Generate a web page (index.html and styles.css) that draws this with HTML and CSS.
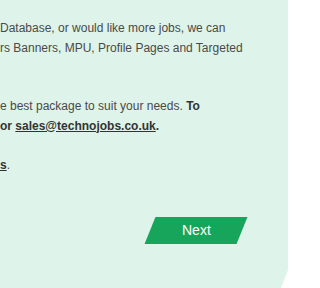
FILE: index.html
```html
<!DOCTYPE html>
<html lang="en">
<head>
<meta charset="utf-8">
<title>Advertising packages</title>
<link rel="stylesheet" href="styles.css">
</head>
<body>
<div class="panel">
  <div class="copy">
    <p class="intro">Database, or would like more jobs, we can<br>rs Banners, MPU, Profile Pages and Targeted</p>
    <p>e best package to suit your needs. <strong>To</strong><br><strong>or <a href="#">sales@technojobs.co.uk</a>.</strong></p>
    <p><a href="#">s</a>.</p>
  </div>
  <div class="actions">
    <a class="next" href="#"><span>Next</span></a>
  </div>
</div>
</body>
</html>
```
FILE: styles.css
```css
html, body {
  margin: 0;
  padding: 0;
  height: 100%;
  overflow: hidden;
  background: #ffffff;
}

.panel {
  width: 288px;
  height: 288px;
  background: #def3e9;
  clip-path: polygon(0 0, 100% 0, 100% 270px, 281px 100%, 0 100%);
  padding-top: 19px;
  box-sizing: border-box;
  font-family: "Liberation Sans", Arial, sans-serif;
  font-size: 12px;
  line-height: 19.5px;
  color: #4a4a4a;
}

.copy {
  padding-bottom: 1px;
}

.copy p {
  margin: 0 0 19.5px 0;
  white-space: nowrap;
}

.copy p.intro {
  margin-bottom: 39px;
}

.copy p:last-child {
  margin-bottom: 0;
}

.copy strong {
  color: #333333;
  font-weight: bold;
}

.copy a {
  color: #333333;
  font-weight: bold;
  text-decoration: underline;
}

.actions {
  display: flex;
  justify-content: flex-end;
  padding-right: 46px;
  margin-top: 41px;
}

.next {
  display: flex;
  align-items: center;
  justify-content: center;
  width: 92px;
  height: 27px;
  background: #17a55b;
  transform: skewX(-22deg);
  text-decoration: none;
}

.next span {
  transform: skewX(22deg);
  color: #ffffff;
  font-size: 14px;
  line-height: 27px;
}
```
